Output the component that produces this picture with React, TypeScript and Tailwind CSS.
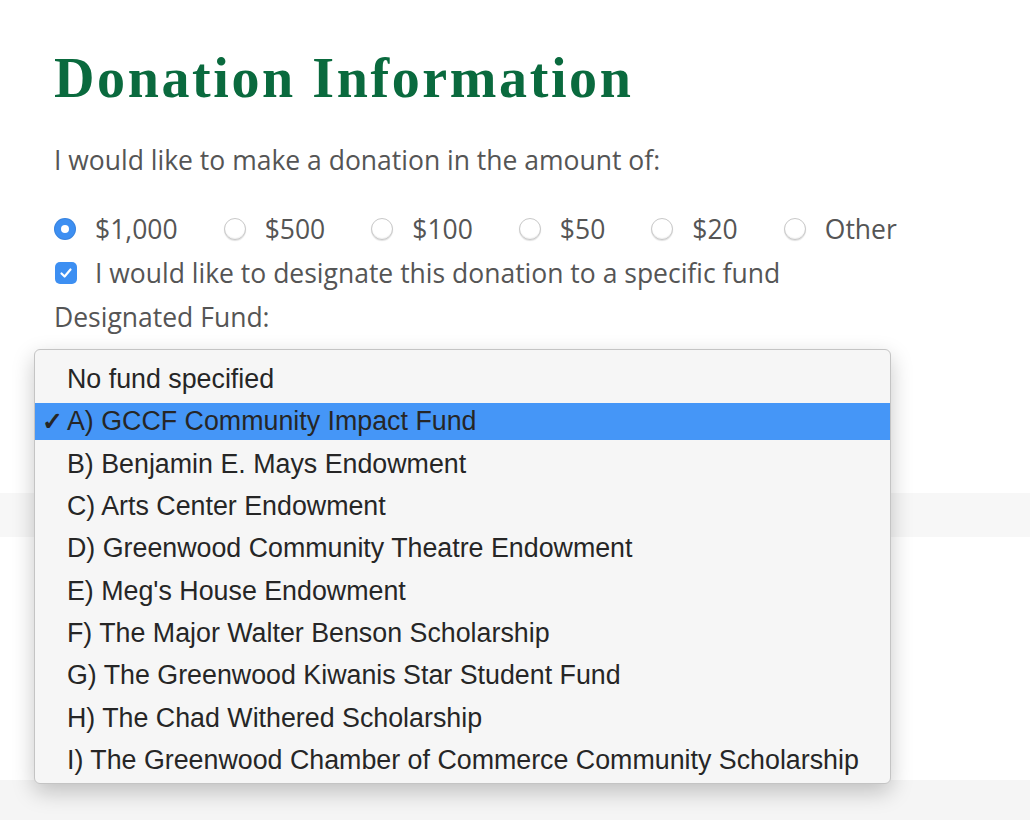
import { useState } from 'react'

const amounts = ['$1,000', '$500', '$100', '$50', '$20', 'Other']

const funds = [
  'No fund specified',
  'A) GCCF Community Impact Fund',
  'B) Benjamin E. Mays Endowment',
  'C) Arts Center Endowment',
  'D) Greenwood Community Theatre Endowment',
  "E) Meg's House Endowment",
  'F) The Major Walter Benson Scholarship',
  'G) The Greenwood Kiwanis Star Student Fund',
  'H) The Chad Withered Scholarship',
  'I) The Greenwood Chamber of Commerce Community Scholarship',
]

function Radio({ checked }: { checked: boolean }) {
  if (checked) {
    return (
      <span className="flex h-[22px] w-[22px] items-center justify-center rounded-full bg-[#3d8ff2] shadow-[inset_0_0_0_1px_rgba(0,0,0,0.08)]">
        <span className="h-[8px] w-[8px] rounded-full bg-white" />
      </span>
    )
  }
  return (
    <span className="h-[22px] w-[22px] rounded-full border border-[#c9c9c9] bg-white shadow-[inset_0_-1px_1px_rgba(0,0,0,0.06),0_1px_1px_rgba(0,0,0,0.12)]" />
  )
}

export default function App() {
  const [amount, setAmount] = useState('$1,000')
  const [selected] = useState(1)

  return (
    <div className="relative flex min-h-screen flex-col bg-white" style={{ fontFamily: '"Open Sans", "Liberation Sans", sans-serif' }}>
      <div className="h-[493px] pl-[54px] pt-[45px] text-[#555555]">
        <h1
          className="text-[56px] font-bold leading-[66px] tracking-[2.6px] text-[#0a6a3e]"
          style={{ fontFamily: '"Liberation Serif", "DejaVu Serif", serif' }}
        >
          Donation Information
        </h1>
        <p className="mt-[32px] text-[26.5px] leading-[34px]">I would like to make a donation in the amount of:</p>

        <div className="mt-[35px] flex items-center gap-[46px] text-[26.5px] leading-[34px]">
          {amounts.map((a) => (
            <button key={a} className="flex items-center gap-[19px]" onClick={() => setAmount(a)}>
              <Radio checked={amount === a} />
              <span>{a}</span>
            </button>
          ))}
        </div>

        <div className="mt-[10px] flex items-center gap-[18px] text-[26.5px] leading-[34px]">
          <span className="ml-[1px] flex h-[22px] w-[22px] items-center justify-center rounded-[5px] bg-[#3d8ff2]">
            <svg width="14" height="14" viewBox="0 0 14 14" fill="none">
              <path d="M2.5 7.5 L5.6 10.5 L11.5 3.5" stroke="white" strokeWidth="2.2" strokeLinecap="round" strokeLinejoin="round" />
            </svg>
          </span>
          <span>I would like to designate this donation to a specific fund</span>
        </div>

        <p className="mt-[10px] text-[26.5px] leading-[34px]">Designated Fund:</p>
      </div>

      <div className="h-[44px] bg-[#f7f7f7]" />
      <div className="h-[243px] bg-white" />
      <div className="flex-1 bg-[#f5f5f5]" />

      <div
        className="absolute left-[34px] top-[349px] w-[857px] rounded-[6px] border border-[#c4c4c4] bg-[#f6f6f6] pb-[2px] pt-[8px] text-[26.8px] text-[#262626] shadow-[0_8px_22px_rgba(0,0,0,0.22)]"
        style={{ fontFamily: '"Liberation Sans", Arial, sans-serif' }}
      >
        {funds.map((f, i) => (
          <div key={f} className="flex h-[42.33px] items-center">
            <div className={`relative flex h-[37px] w-full items-center pl-[32px] ${i === selected ? 'bg-[#4596f7]' : ''}`}>
              {i === selected && <span className="absolute left-[7px] text-[25px] font-bold">✓</span>}
              <span>{f}</span>
            </div>
          </div>
        ))}
      </div>
    </div>
  )
}
